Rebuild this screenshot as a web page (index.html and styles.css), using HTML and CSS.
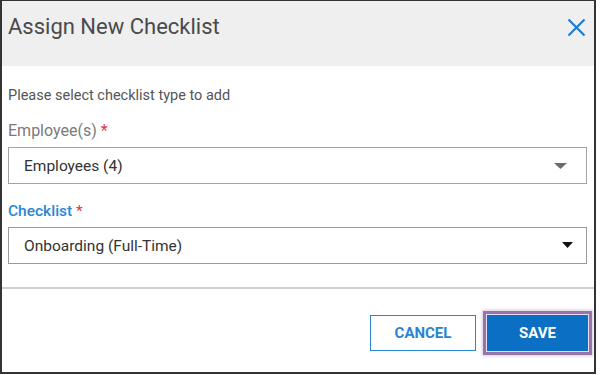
FILE: index.html
```html
<!DOCTYPE html>
<html>
<head>
<meta charset="utf-8">
<link rel="stylesheet" href="styles.css">
</head>
<body>
<div class="dialog">
  <div class="header">
    <div class="title">Assign New Checklist</div>
    <svg class="close" width="19" height="19" viewBox="0 0 19 19"><path d="M1.5 1.5 L17.5 17.5 M17.5 1.5 L1.5 17.5" stroke="#1b7dcc" stroke-width="2.2" fill="none"/></svg>
  </div>
  <div class="content">
    <div class="intro">Please select checklist type to add</div>
    <div class="label first">Employee(s) <span class="req">*</span></div>
    <div class="select">
      <span>Employees (4)</span>
      <svg class="arrow a1" width="13" height="6" viewBox="0 0 13 6"><path d="M0 0 H13 L6.5 6 Z" fill="#6a6a6a"/></svg>
    </div>
    <div class="label second blue">Checklist <span class="req">*</span></div>
    <div class="select dark">
      <span>Onboarding (Full-Time)</span>
      <svg class="arrow a2" width="11" height="6" viewBox="0 0 11 6"><path d="M0 0 H11 L5.5 6 Z" fill="#111"/></svg>
    </div>
  </div>
  <div class="sep"></div>
  <div class="footer">
    <button class="btn cancel">CANCEL</button>
    <button class="btn save">SAVE</button>
  </div>
</div>
</body>
</html>
```

FILE: styles.css
```css
html, body {
  margin: 0;
  padding: 0;
  background: #fff;
}
body {
  font-family: Roboto, "Liberation Sans", sans-serif;
}
.dialog {
  width: 596px;
  height: 374px;
  box-sizing: border-box;
  border-top: 1px solid #333;
  border-left: 2px solid #333;
  border-right: 2px solid #333;
  border-bottom: 2px solid #333;
  display: flex;
  flex-direction: column;
}
.header {
  height: 65px;
  background: #efefef;
  display: flex;
  align-items: flex-start;
  justify-content: space-between;
  padding: 12px 7px 0 6px;
  box-sizing: border-box;
}
.title {
  font-size: 22px;
  line-height: 28px;
  color: #4a4a4a;
}
.close {
  margin-top: 5px;
  margin-right: 1px;
}
.content {
  padding: 20px 7px 23px 6px;
  display: flex;
  flex-direction: column;
}
.intro {
  font-size: 14.5px;
  line-height: 20px;
  color: #555;
}
.label {
  font-size: 16px;
  line-height: 20px;
  color: #7a7a7a;
}
.label.first { margin-top: 15px; }
.label.second { margin-top: 17px; }
.label.blue {
  color: #2a87d6;
  font-size: 15.5px;
  font-weight: 500;
}
.req {
  color: #e0393e;
  font-weight: 400;
}
.select {
  margin-top: 6px;
  height: 37px;
  box-sizing: border-box;
  border: 1px solid #a3a3a3;
  display: flex;
  align-items: center;
  justify-content: space-between;
  padding: 0 19px 0 15px;
  font-size: 15.5px;
  color: #333;
}
.select.dark {
  border-color: #9a9a9a;
  padding-right: 13px;
}
.a2 { margin-top: -2px; }
.sep {
  height: 2px;
  background: #cfcfcf;
}
.footer {
  display: flex;
  justify-content: flex-end;
  gap: 11px;
  padding: 26px 6px 0 0;
}
.btn {
  height: 36px;
  font-family: Roboto, "Liberation Sans", sans-serif;
  font-size: 15px;
  font-weight: 700;
  box-sizing: border-box;
  cursor: pointer;
}
.cancel {
  width: 106px;
  background: #fff;
  color: #2a84d2;
  border: 1px solid #2a84d2;
}
.save {
  width: 101px;
  background: #0b6fc4;
  color: #fff;
  border: 1px solid #0b6fc4;
  box-shadow: 0 0 0 1px #e8ddee, 0 0 0 4px #9676aa, 0 0 3px 5px rgba(140, 100, 165, 0.35);
}
```
